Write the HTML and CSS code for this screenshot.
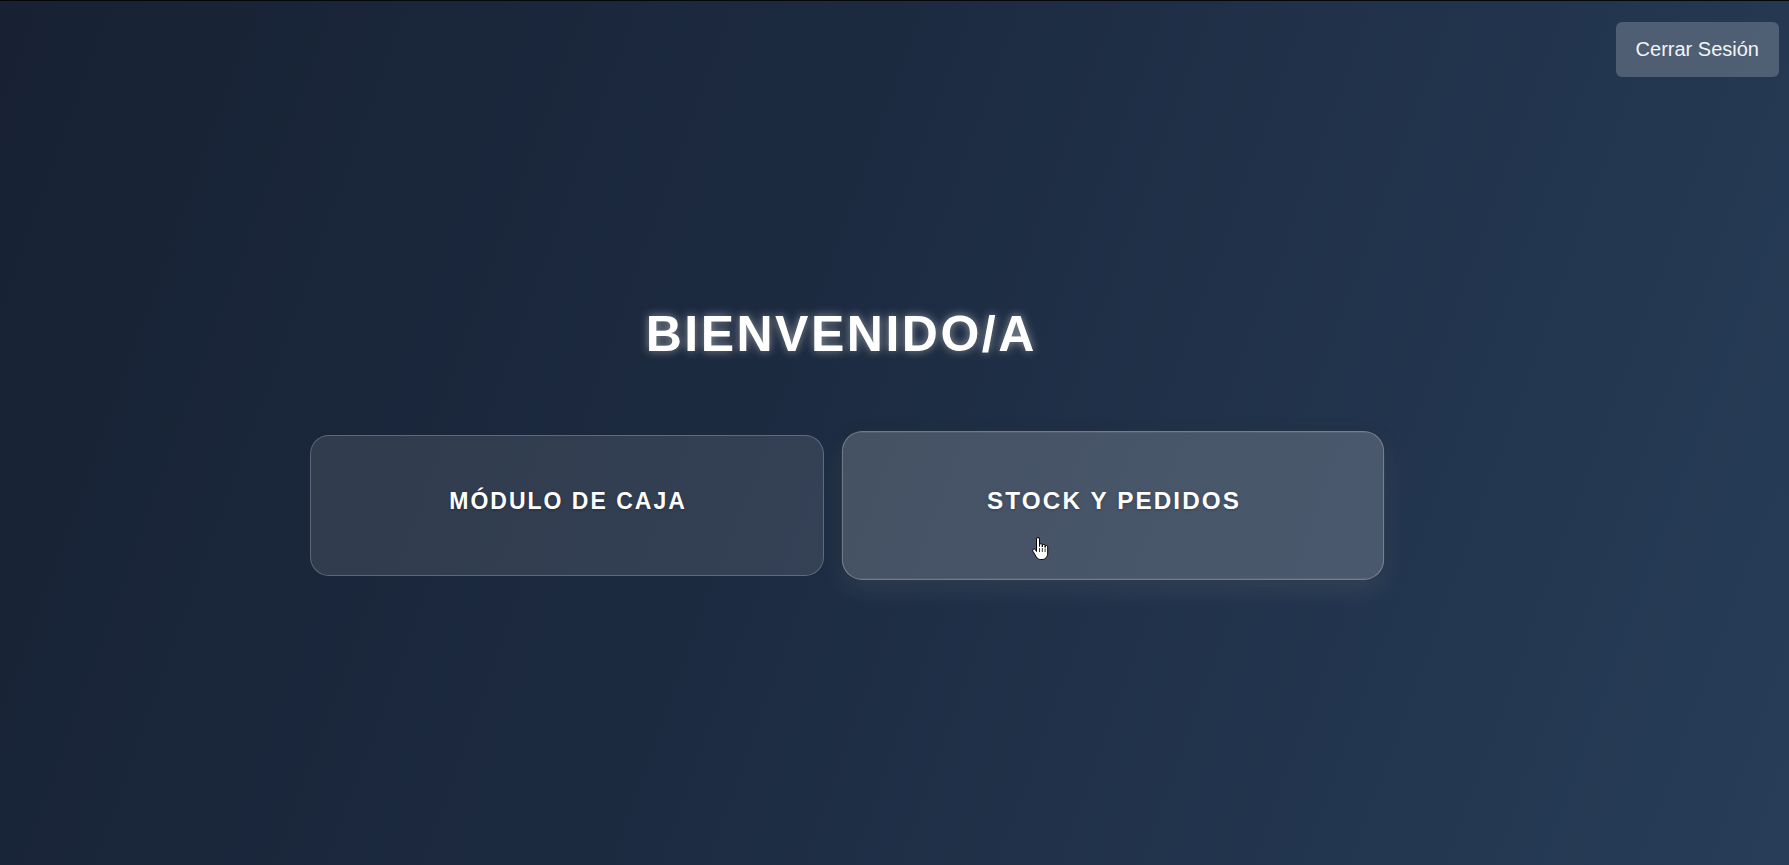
FILE: index.html
```html
<!DOCTYPE html>
<html lang="es">
<head>
<meta charset="utf-8">
<title>Inicio</title>
<link rel="stylesheet" href="styles.css">
</head>
<body>
  <header class="topbar">
    <button class="logout">Cerrar Sesión</button>
  </header>
  <main class="home">
    <h1 class="welcome">BIENVENIDO/A</h1>
    <div class="modules">
      <a class="module-card">MÓDULO DE CAJA</a>
      <a class="module-card is-hover">STOCK Y PEDIDOS</a>
    </div>
  </main>
  <svg class="cursor" width="17" height="24" viewBox="0 0 17 24" xmlns="http://www.w3.org/2000/svg">
    <path d="M4.5 2 a1.5 1.5 0 0 1 3 0 V9.5 V8 a1.4 1.4 0 0 1 2.8 0 V10 V8.8 a1.4 1.4 0 0 1 2.8 0 V10.5 V9.8 a1.3 1.3 0 0 1 2.6 0 V16 c0 3.5 -2.2 6.5 -5.5 6.5 H8.5 c-2 0 -3.2 -1 -4.2 -2.6 L0.9 14.2 a1.4 1.4 0 0 1 2.3 -1.6 L4.5 14.5 Z" fill="#fff" stroke="#000" stroke-width="1" stroke-linejoin="round"/>
    <path d="M7.5 11 V15 M10.3 11 V15 M13.1 11.5 V15" stroke="#000" stroke-width="0.8"/>
  </svg>
</body>
</html>
```

FILE: styles.css
```css
* {
  box-sizing: border-box;
}

html, body {
  height: 100%;
}

body {
  margin: 0;
  min-height: 865px;
  border-top: 1px solid #05070b;
  background: linear-gradient(110deg, #172133 0%, #1c2a40 42%, #273d58 100%);
  font-family: "Liberation Sans", Arial, sans-serif;
  color: #ffffff;
  overflow: hidden;
  position: relative;
}

.topbar {
  display: flex;
  justify-content: flex-end;
  padding: 21px 10px 0 0;
}

.logout {
  font-family: "Liberation Sans", Arial, sans-serif;
  font-size: 20px;
  line-height: 23px;
  padding: 16px 20px;
  color: #f2f4f7;
  background: rgba(255, 255, 255, 0.2);
  border: none;
  border-radius: 6px;
}

.home {
  display: flex;
  flex-direction: column;
  align-items: center;
  padding: 229px 109px 0 0;
}

.welcome {
  margin: 0 0 72px 0;
  font-size: 50px;
  font-weight: 700;
  line-height: 57px;
  letter-spacing: 2.5px;
  padding-left: 2.5px;
  color: #ffffff;
  text-shadow: 0 0 10px rgba(255, 255, 255, 0.55), 0 2px 6px rgba(0, 0, 0, 0.25);
}

.modules {
  display: flex;
  gap: 32px;
}

.module-card {
  width: 514px;
  height: 141px;
  padding: 52px 0 0 2px;
  text-align: center;
  font-size: 23px;
  font-weight: 700;
  letter-spacing: 2px;
  line-height: 26px;
  color: #ffffff;
  background: rgba(255, 255, 255, 0.1);
  border: 1px solid rgba(255, 255, 255, 0.22);
  border-radius: 19px;
  text-shadow: 0 1px 3px rgba(0, 0, 0, 0.25);
}

.module-card.is-hover {
  background: rgba(255, 255, 255, 0.18);
  border-color: rgba(255, 255, 255, 0.25);
  transform: scale(1.055);
  box-shadow: 0 8px 22px rgba(255, 255, 255, 0.09), 0 0 12px rgba(0, 0, 0, 0.2);
}

.cursor {
  position: absolute;
  left: 1032px;
  top: 536px;
}
```
